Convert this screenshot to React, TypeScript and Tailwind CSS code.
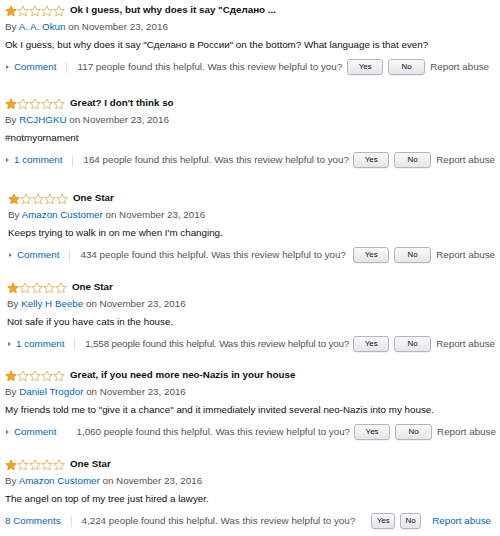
import React from "react";

// DATA - each review as it appears in the screenshot collage (small offsets kept per review)
interface Review {
  title: string;
  author: string;
  body: string;
  comments: string;
  arrow: boolean;
  helpful: string;
  pl: string;
  pr: string;
  mt: string;
  tight?: boolean;
  last?: boolean;
}

const reviews: Review[] = [
  {
    title: "Ok I guess, but why does it say \"Сделано ...",
    author: "A. A. Okun",
    body: "Ok I guess, but why does it say \"Сделано в России\" on the bottom? What language is that even?",
    comments: "Comment",
    arrow: true,
    helpful: "117",
    pl: "pl-[5px]",
    pr: "pr-[11px]",
    mt: "mt-[4px]",
  },
  {
    title: "Great? I don't think so",
    author: "RCJHGKU",
    body: "#notmyornament",
    comments: "1 comment",
    arrow: true,
    helpful: "164",
    pl: "pl-[5px]",
    pr: "pr-[5px]",
    mt: "mt-[22px]",
  },
  {
    title: "One Star",
    author: "Amazon Customer",
    body: "Keeps trying to walk in on me when I'm changing.",
    comments: "Comment",
    arrow: true,
    helpful: "434",
    pl: "pl-[8px]",
    pr: "pr-[5px]",
    mt: "mt-[24px]",
  },
  {
    title: "One Star",
    author: "Kelly H Beebe",
    body: "Not safe if you have cats in the house.",
    comments: "1 comment",
    arrow: true,
    helpful: "1,558",
    pl: "pl-[7px]",
    pr: "pr-[5px]",
    mt: "mt-[18px]",
    tight: true,
  },
  {
    title: "Great, if you need more neo-Nazis in your house",
    author: "Daniel Trogdor",
    body: "My friends told me to \"give it a chance\" and it immediately invited several neo-Nazis into my house.",
    comments: "Comment",
    arrow: true,
    helpful: "1,060",
    pl: "pl-[5px]",
    pr: "pr-[5px]",
    mt: "mt-[17px]",
  },
  {
    title: "One Star",
    author: "Amazon Customer",
    body: "The angel on top of my tree just hired a lawyer.",
    comments: "8 Comments",
    arrow: false,
    helpful: "4,224",
    pl: "pl-[5px]",
    pr: "pr-[9px]",
    mt: "mt-[18px]",
    last: true,
  },
];

// COMPONENT - one star, filled orange or just the outline
const Star = ({ filled }: { filled: boolean }) => (
  <svg width="12" height="12" viewBox="0 0 24 24">
    <path
      d="M12 1.8l3.1 6.9 7.4.7-5.6 5 1.7 7.3L12 17.9l-6.6 3.8 1.7-7.3-5.6-5 7.4-.7z"
      fill={filled ? "#f4a61c" : "#fff"}
      stroke={filled ? "#e08a0c" : "#d9a441"}
      strokeWidth="1.5"
      strokeLinejoin="round"
    />
  </svg>
);

// COMPONENT - grey Amazon style button
const VoteButton = ({ label, w }: { label: string; w: string }) => (
  <span
    className={`${w} h-[16px] flex items-center justify-center rounded-[3px] border border-[#b3b6bb] bg-gradient-to-b from-[#f8f9fa] to-[#e4e6e9] text-[8px] text-[#111] shadow-[0_1px_0_rgba(0,0,0,0.05)]`}
  >
    {label}
  </span>
);

const ReviewItem = ({ review }: { review: Review }) => (
  <article className={`${review.pl} ${review.pr} ${review.mt}`}>
    {/* Stars + title */}
    <div className="flex items-center h-[13px]">
      <div className="flex items-center">
        <Star filled />
        <Star filled={false} />
        <Star filled={false} />
        <Star filled={false} />
        <Star filled={false} />
      </div>
      <h2 className="ml-[5px] text-[9.8px] font-bold text-[#111] whitespace-nowrap">{review.title}</h2>
    </div>
    {/* Author line */}
    <p className="mt-[3px] text-[9.8px] text-[#555] whitespace-nowrap leading-[13px]">
      By <span className="text-[#0066c0]">{review.author}</span> on November 23, 2016
    </p>
    {/* Body */}
    <p className="mt-[5px] text-[9.8px] text-[#111] whitespace-nowrap leading-[13px]">{review.body}</p>
    {/* Comment + helpful row */}
    <div className="mt-[8px] flex items-center h-[16px] text-[9.8px] whitespace-nowrap">
      {review.arrow && (
        <span className="w-0 h-0 border-y-[2.5px] border-y-transparent border-l-[3px] border-l-[#777] mr-[5px] ml-[1px]" />
      )}
      <span className="text-[#0066c0]">{review.comments}</span>
      <span className="w-px h-[11px] bg-[#ddd] mx-[10px]" />
      <span className={`text-[#555] ${review.tight ? "tracking-[-0.15px]" : ""}`}>
        {review.helpful} people found this helpful. Was this review helpful to you?
      </span>
      {review.last ? (
        <div className="flex items-center ml-auto gap-[5px]">
          <VoteButton label="Yes" w="w-[24px]" />
          <VoteButton label="No" w="w-[21px]" />
          <span className="ml-[6px] text-[#0066c0]">Report abuse</span>
        </div>
      ) : (
        <div className="flex items-center ml-auto gap-[5px] pl-[4px]">
          <VoteButton label="Yes" w="w-[36px]" />
          <VoteButton label="No" w="w-[37px]" />
          <span className="text-[#555]">Report abuse</span>
        </div>
      )}
    </div>
  </article>
);

export default function App() {
  return (
    <main
      className="w-[500px] h-[536px] bg-white overflow-hidden"
      style={{ fontFamily: '"Liberation Sans", Arial, sans-serif' }}
    >
      {reviews.map((review, i) => (
        <ReviewItem key={i} review={review} />
      ))}
    </main>
  );
}
